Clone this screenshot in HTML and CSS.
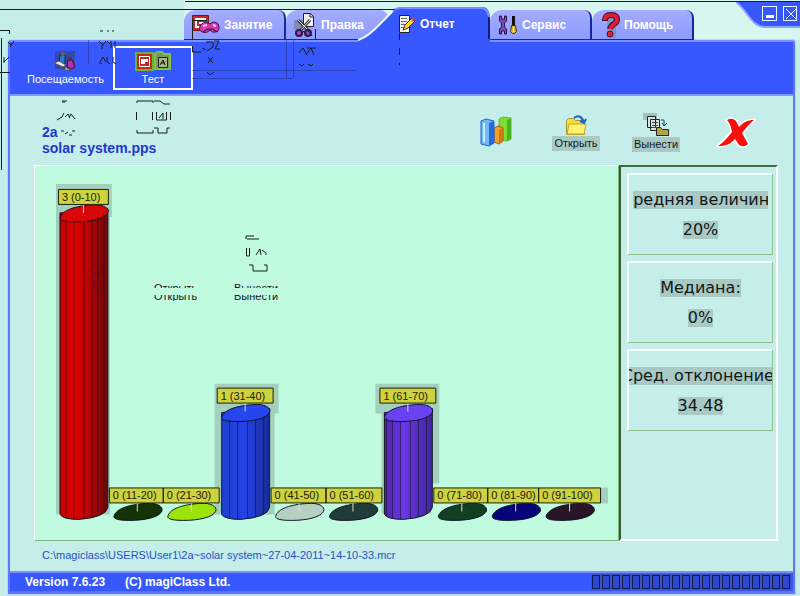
FILE: index.html
```html
<!DOCTYPE html>
<html lang="ru">
<head>
<meta charset="utf-8">
<title>magiClass</title>
<link rel="stylesheet" href="styles.css">
</head>
<body>
<div class="app">
  <header class="top">
    <nav class="tabs">
      <button class="tab">
        <svg class="icon" width="30" height="24" viewBox="0 0 30 24"><path fill="#c22a28" stroke="#701818" d="M2.500 2.500h16v15h-16z"/><path fill="none" stroke="#fff" stroke-width="2" d="M16 6H6v8h5M9 10h8"/><path fill="#d43ab0" stroke="#481050" d="M10 13q3-5 8-3l2 1q4-4 8 0 3 6-2 8-4 1-6-2-3 4-8 2-4-2-2-6z"/><path stroke="#ffc8ff" stroke-width="2" d="M13 13l4-1M23 12l3 1"/></svg>
        <span>Занятие</span>
      </button>
      <button class="tab tab-edit">
        <svg class="icon" width="26" height="26" viewBox="0 0 26 26"><path fill="#808bbd" d="M0 8h11v10H0z"/><path fill="#eee" stroke="#222" d="M9.500 1.500h7l3 3v10h-10z"/><path fill="none" stroke="#222" d="M16 2v3h4"/><path stroke="#333" stroke-width="3" d="M4 8l11 11M16 8L5 20"/><path stroke="#eee" d="M4 8l11 11M16 8L5 20"/><circle cx="5" cy="21" r="3" fill="#9c55c6" stroke="#37105c" stroke-width="2"/><circle cx="14" cy="21" r="3" fill="#9c55c6" stroke="#37105c" stroke-width="2"/></svg>
        <span>Правка</span>
      </button>
      <button class="tab tab-active" aria-current="page">
        <svg class="slope" width="132" height="42" viewBox="0 0 132 42"><path fill="#3858ff" d="M0 34C12 31 26 13 35 5q4-5 11-5h80q5 1 6 10v32H0z"/><path fill="none" stroke="#e8faff" stroke-width="2" d="M0 33C12 30 25 13 34 5"/><path fill="none" stroke="#7890ff" stroke-width="2" d="M35 4q4-4 11-3h79q5 2 6 9"/><path stroke="#102080" stroke-width="2" d="M131 10v22"/></svg>
        <svg class="icon" width="18" height="20" viewBox="0 0 18 20"><path fill="#f3f6e8" stroke="#222" d="M1.500 1.500h10v17h-10z"/><path stroke="#668" d="M3 4.500h6M3 7.500h6M3 10.500h5M3 13.500h4"/><path fill="#f4d83c" stroke="#443510" d="M5 16l2-5 7-7 3 3-7 7z"/><path fill="#e63c50" d="M13 5l2-2 2 3-2 2z"/></svg>
        <span>Отчет</span>
      </button>
      <button class="tab tab-service">
        <svg class="icon" width="20" height="20" viewBox="0 0 20 20"><path fill="#7d4caf" stroke="#2c1250" d="M1.500 1v5l2 2v4l-2 2v5h2v-3h3v3h2v-5l-2-2V8l2-2V1h-2v3h-3V1z"/><path fill="#111" d="M14 1h3v9h-3z"/><path fill="#e3b629" stroke="#403010" d="M13.500 10.500h4l1 6-2 2h-2l-2-2z"/><path stroke="#fff29a" d="M15.500 12v5"/></svg>
        <span>Сервис</span>
      </button>
      <button class="tab tab-help">
        <svg class="icon" width="18" height="26" viewBox="0 0 18 26"><path fill="#8992c8" d="M5 0h9v26H5z"/><path fill="none" stroke="#421428" stroke-width="6" d="M3 9q0-6 6-6 6 0 6 5c0 4-6 4-7 9"/><path fill="none" stroke="#e11d35" stroke-width="4" d="M3 8q0-5 6-5 6 0 6 5c0 4-6 4-7 9"/><circle cx="8" cy="22" r="3" fill="#e11d35" stroke="#421428"/></svg>
        <span>Помощь</span>
      </button>
    </nav>
    <div class="window-controls">
      <svg class="corner" width="64" height="26" viewBox="0 0 64 26"><path fill="#3858ff" d="M0 0h64v25H28C14 23 12 9 0 0z"/><path fill="none" stroke="#8ca3ff" stroke-width="2" d="M0 0C12 9 14 23 28 25h36"/></svg>
      <button class="win" aria-label="Свернуть"><svg width="14" height="14" viewBox="0 0 14 14"><path stroke="#fff" stroke-width="3" d="M3 9.500h8"/></svg></button>
      <button class="win" aria-label="Закрыть"><svg width="14" height="14" viewBox="0 0 14 14"><path stroke="#fff" d="M2 2l10 10M12 2L2 12"/></svg></button>
    </div>
  </header>

  <div class="frame">
    <div class="ribbon">
      <button class="ribbon-item">
        <svg width="24" height="20" viewBox="0 0 24 20"><path fill="#3349ad" d="M1 0h20v18H1z"/><path fill="#2678d9" stroke="#122850" d="M6 4h5v9H5z"/><circle cx="9" cy="3" r="2" fill="#8a5832"/><path fill="#b631af" stroke="#421040" d="M14 9h4l3 7-4 2-4-2z"/><circle cx="16" cy="8" r="2" fill="#5c3030"/><path fill="#e8e5dc" stroke="#555" d="M0 12l5-2 7 4-3 2zM11 16l6 3h-6z"/></svg>
        <span>Посещаемость</span>
      </button>
      <button class="ribbon-item selected">
        <svg width="36" height="20" viewBox="0 0 36 20"><path fill="#c02c20" stroke="#6fae3c" stroke-width="2" d="M1 2h17v17H1z"/><path fill="#b92b20" stroke="#fff" d="M4.500 5.500h10v10h-10z"/><path fill="#fff" d="M6 8h7v3h-3v2H6z"/><path fill="#81945b" stroke="#74c83c" stroke-width="2" d="M20 3l2-2h5l2 2h6v15H20z"/><path fill="#a7b581" stroke="#222" d="M23.500 6.500h9v10h-9z"/><path stroke="#111" fill="none" d="M25 14l3-5 2 5M26 12h4"/></svg>
        <span>Тест</span>
      </button>
    </div>

    <main class="content">
      <div class="heading">
        <h1>2a<br>solar system.pps</h1>
        <div class="actions">
          <button class="action" aria-label="Диаграмма"><svg width="32" height="32" viewBox="0 0 32 32"><path fill="#7edc35" stroke="#66b52d" d="M19 3l4-2 8 1v21l-4 2-8-2z"/><path fill="#45b51d" d="M27 4l4-2v21l-4 2z"/><path fill="#f3a12c" stroke="#9a5c16" d="M14 12l4-2 5 2v13l-4 3-5-2z"/><path fill="#c97917" d="M19 14l4-2v13l-4 3z"/><path fill="#73b8fa" stroke="#2263cb" d="M1 5l5-2 8 2v22l-5 3-8-2z"/><path fill="#276bd8" d="M9 7l5-2v22l-5 3z"/><path stroke="#c8efff" stroke-width="2" d="M4 7v19"/></svg></button>
          <button class="action"><svg width="24" height="22" viewBox="0 0 24 22"><path fill="#f3dd3c" stroke="#aa9630" d="M2.500 20.500v-14l2-2h5l2 2h9v14z"/><path fill="#fff270" stroke="#c0aa30" d="M3 20l2-10h17l-2 10z"/><path fill="none" stroke="#2465c4" stroke-width="2" d="M10 4q6-5 10 4M16 7l4 2 2-4"/></svg><span>Открыть</span></button>
          <button class="action"><svg width="28" height="24" viewBox="0 0 28 24"><path fill="#a1c3bf" d="M1 0h14v7H1z"/><path fill="#d7e4dd" stroke="#222" d="M5.500 3.500h8v11h-8zM8.500 6.500h9v11h-9z"/><path stroke="#444" d="M10 9.500h6M10 12.500h6M10 14.500h4"/><path fill="#b6a344" stroke="#222" d="M14.500 22.500v-8h4l2 2h6v6z"/><path fill="none" stroke="#203c70" d="M19 7h3v5M20 10l2 3 3-3"/></svg><span>Вынести</span></button>
          <button class="action" aria-label="Удалить"><svg width="40" height="32" viewBox="0 0 40 32"><path fill="#f8100c" stroke="#fff" stroke-width="3" paint-order="stroke" d="M11 4q5-3 9 1l3 6c5-5 8-7 15-7-5 4-8 8-12 13l6 11q-4 4-9 1l-4-6c-5 5-8 7-17 7 6-4 9-8 14-14-1-5-2-9-5-12z"/></svg></button>
        </div>
      </div>

      <div class="panels">
        <section class="chart">
          <svg viewBox="0 0 584 374" role="img">
            <defs>
              <linearGradient id="red"><stop offset="0" stop-color="#c40000"/><stop offset=".3" stop-color="#e00000"/><stop offset=".6" stop-color="#b80404"/><stop offset="1" stop-color="#6e0808"/></linearGradient>
              <linearGradient id="blue"><stop offset="0" stop-color="#2040d0"/><stop offset=".5" stop-color="#2442e8"/><stop offset="1" stop-color="#182c94"/></linearGradient>
              <linearGradient id="violet"><stop offset="0" stop-color="#5225a8"/><stop offset=".4" stop-color="#6a38e6"/><stop offset="1" stop-color="#40259c"/></linearGradient>
              <path id="disc" d="M-24 5C-22-3-8-7 8-8 19-9 26-5 24 0 21 6 7 9-8 9-18 9-24 8-24 5z"/>
            </defs>
            <g class="halo"><path d="M21 18h56v33h-2v298H21zM180 218h64v30h-4v101h-60zM341 218h64v100h-8v30h-50V248h-6zM560 322h14v16h-14z"/></g>
            <g class="shape">
              <path fill="url(#red)" d="M25 47v302q3 5 19 5 27-2 29-12V43z"/><use href="#disc" x="49" y="47" fill="#d90707"/>
              <path class="ribs" d="M31 53v300M39 55v299M49 55v299M57 54v297M63 51v298M69 48v298"/>
              <path fill="url(#blue)" d="M187 247v102q3 5 19 5 27-2 29-12V243z"/><use href="#disc" x="211" y="247" fill="#2546ef"/>
              <path class="ribs" d="M195 254v99M203 256v98M213 256v97M221 254v97M229 251v97"/>
              <path fill="url(#violet)" d="M350 247v102q3 5 19 5 27-2 29-12V243z"/><use href="#disc" x="374" y="247" fill="#6942f3"/>
              <path class="ribs" d="M352 252v99M358 254v99M366 256v98M376 256v97M384 254v97M392 251v97"/>
              <use href="#disc" x="103" y="346" fill="#143407"/><use href="#disc" x="157" y="346" fill="#9be30b"/>
              <use href="#disc" x="265" y="346" fill="#b5cfc3"/><use href="#disc" x="319" y="346" fill="#213b38"/>
              <use href="#disc" x="428" y="346" fill="#103f21"/><use href="#disc" x="482" y="346" fill="#050579"/><use href="#disc" x="536" y="346" fill="#291528"/>
            </g>
            <g class="tags">
              <path d="M23.500 23.500h50v15h-50zM182.500 222.500h56v15h-56zM345.500 222.500h56v15h-56zM74.500 322.500h54v15h-54zM128.500 322.500h56v15h-56zM236.500 322.500h55v15h-55zM291.500 322.500h56v15h-56zM399.500 322.500h54v15h-54zM453.500 322.500h51v15h-51zM504.500 322.500h62v15h-62z"/>
            </g>
            <path class="stems" d="M48.500 39v8M210.500 238v8M373.500 238v8M102.500 338v8M156.500 338v8M264.500 338v8M318.500 338v8M427.500 338v8M481.500 338v8M535.500 338v8"/>
            <g class="values">
              <text x="27" y="35">3 (0-10)</text><text x="186" y="234">1 (31-40)</text><text x="349" y="234">1 (61-70)</text>
              <text x="78" y="334">0 (11-20)</text><text x="132" y="334">0 (21-30)</text><text x="240" y="334">0 (41-50)</text><text x="295" y="334">0 (51-60)</text><text x="403" y="334">0 (71-80)</text><text x="457" y="334">0 (81-90)</text><text x="508" y="334">0 (91-100)</text>
            </g>
          </svg>
        </section>
        <aside class="stats">
          <div class="stat"><div class="line"><span>Средняя величина</span></div><div class="line"><span>20%</span></div></div>
          <div class="stat"><div class="line"><span>Медиана:</span></div><div class="line"><span>0%</span></div></div>
          <div class="stat"><div class="line wide"><span>Сред. отклонение:</span></div><div class="line"><span>34.48</span></div></div>
        </aside>
      </div>
      <p class="path">C:\magiclass\USERS\User1\2a~solar system~27-04-2011~14-10-33.mcr</p>
    </main>

    <footer class="status">
      <span>Version 7.6.23</span><span>(C) magiClass Ltd.</span>
      <div class="cells"><i></i><i></i><i></i><i></i><i></i><i></i><i></i><i></i><i></i><i></i><i></i><i></i><i></i><i></i><i></i><i></i><i></i><i></i><i></i><i></i></div>
    </footer>
  </div>

  <div class="traces" aria-hidden="true">
    <svg width="620" height="310" viewBox="0 0 620 310">
      <path class="faint" d="M88.500 40v24M192 70.500h164M192 78.500h101M286.500 40v38M293.500 40v38"/>
      <path d="M0 9.500h395M0 30.500h10M1.500 38v132M9.500 30v4M0 72.500h10M8 42l3 3M14 41l-4 6M9 57l-5 5M4 57v6M100 31h3M107 31h2M112 31h2M99 41l4 4 3-4M102 45v4M107 41l3 3M111 41v7M115 41v7M100 62l3-5 3 5M99 63h3M107 57v5l3 2M113 57v5l3 2M192.500 22v18M192 20.500h15M192.500 46v6h9M203 32l5-3h4l6 3M206 42h7v5l-6 4M202 48l4 2M214 41h5l-4 8h5M208 57l5 6M213 57l-5 6M207 72l3 3 4-3M300 36l4-5 4 5M308 31l4 5M315.500 29v10M299 53l4-5 4 7M306 55l5-7 3 7M307 48h9M299 64l3 2 2-2M308 64l3 2 2-2M399.500 33v7M399.500 48v7M399.500 63v2"/>
      <path d="M62 101h5M62 102h3M57 120l5-3 2-4M65 117l3-3 2 4M69 118l2-4 4 5M61 131h3M65 134l3-2M69 135h3M72 131h3M137 103v-2h16v2M154 101h6l4 3h6M136.500 112v8M152.500 112v8M156.500 112v8h10v-8M170.500 112v8M159 118l4-5v6M137 130v3h16v-3M154 128h4v5h9v-5h3M246 239v-3h8M247 239h12M246.500 248v8M249.500 248v8h-3M256 255l4-6 1 6M262 250l4 3v2M249 265h4v6h14v-6h-3"/>
      <path class="faint" d="M93 265h9v8h-9M94 280v8h8M102 280v5"/>
    </svg>
    <div class="slice upper open">Открыть</div><div class="slice lower open">Открыть</div>
    <div class="slice upper export">Вынести</div><div class="slice lower export">Вынести</div>
  </div>
</div>
</body>
</html>
```

FILE: styles.css
```css
* { box-sizing: border-box; }
body { margin: 0; background: #c5eeea; font-family: "Liberation Sans", Arial, sans-serif; font-size: 11px; color: #101818; }
button { border: 0; padding: 0; margin: 0; background: none; font: inherit; color: inherit; }
h1, p { margin: 0; }

.app { position: relative; min-height: 100vh; display: flex; flex-direction: column; overflow: hidden; }

.top { display: flex; height: 40px; padding-left: 184px; background: linear-gradient(90deg, #c5eeea 184px, #d6f6ef 184px); }
.top::before { content: ""; position: absolute; top: 1px; left: 185px; right: 0; height: 1px; background: #142018; }
.tabs { display: flex; align-items: flex-end; flex: 1; }
.tab { position: relative; display: flex; align-items: center; gap: 4px; width: 102px; height: 30px; padding-left: 6px; color: #fff; font-weight: bold; font-size: 12px; background: linear-gradient(#a6acff, #8c9cff); border-right: 2px solid #1628a0; border-bottom: 1px solid #1628a0; border-radius: 12px 8px 0 0; }
.tab .icon { position: relative; flex: none; }
.tab span { position: relative; }
.tab-edit { padding-left: 8px; gap: 1px; border-right: 0; }
.tab-active { z-index: 1; height: 32px; padding-left: 10px; background: none; border: 0; }
.slope { position: absolute; right: 0; top: -1px; }
.tab-service { padding-left: 8px; }
.tab-help { padding-left: 10px; }

.window-controls { position: relative; display: flex; gap: 6px; width: 64px; padding: 6px 3px 0 26px; }
.corner { position: absolute; left: 0; top: 2px; }
.win { position: relative; width: 15px; height: 15px; border: 1px solid #e8f4ff; display: grid; place-items: center; overflow: hidden; }

.frame { flex: 1; display: flex; flex-direction: column; margin: 0 5px 2px 8px; border: 2px solid #5c78ff; border-top: 0; border-radius: 3px 3px 0 0; box-shadow: 0 0 0 1px #b8d4ff; }
.ribbon { display: flex; height: 56px; padding: 4px 0 0 8px; background: #3858ff; border-top: 2px solid #7890ff; border-bottom: 2px solid #7c98ff; color: #fff; }
.ribbon-item { width: 95px; height: 44px; display: flex; flex-direction: column; align-items: center; justify-content: center; gap: 2px; }
.ribbon-item.selected { width: 80px; border: 2px solid #fff; }

.content { flex: 1; display: flex; flex-direction: column; }
.heading { display: flex; justify-content: space-between; height: 69px; padding: 16px 17px 0 32px; }
h1 { padding-top: 12px; font-size: 14px; line-height: 16px; color: #2038cc; }
.actions { display: grid; grid-template-columns: repeat(4, 80px); align-items: start; }
.action { display: flex; flex-direction: column; align-items: center; justify-content: center; min-height: 40px; }
.action span { background: #a9c9c5; padding: 0 2px; line-height: 15px; }

.panels { flex: 1; display: grid; grid-template-columns: minmax(0, 585fr) minmax(0, 159fr); margin: 0 15px 0 24px; }
.chart { background: #c0fbe0; border: 1px solid #7fb67f; border-top-color: #fff; border-left-color: #fff; }
.chart svg { display: block; width: 100%; }
.halo { fill: #a3cfbd; }
.shape { stroke: #141428; }
.ribs { fill: none; stroke: #14142c; stroke-opacity: .65; }
.tags { fill: #ced23d; stroke: #1c2008; }
.stems { stroke: #d9e0ce; }
.values { font-size: 11px; fill: #20200c; }
.stats { display: flex; flex-direction: column; gap: 6px; padding: 6px 3px 0 6px; border: 2px solid #fff; border-top: 2px solid #426b42; border-left: 2px solid #365c36; }
.stat { height: 82px; padding: 16px 0 0; border: 1px solid #8abf8c; border-top: 2px solid #f2fffb; border-left: 2px solid #f2fffb; font: 16px/20px "DejaVu Sans", sans-serif; }
.line { display: flex; justify-content: center; margin: 0 4px 12px; overflow: hidden; white-space: nowrap; }
.line.wide { margin: 0 0 12px; }
.line span { line-height: 18px; background: #a9c9c5; }

.path { padding: 6px 32px 8px; line-height: 16px; color: #2850c8; }
.status { display: flex; align-items: center; gap: 20px; height: 21px; padding: 0 2px 0 15px; background: #3858ff; border-top: 2px solid #7890ff; border-bottom: 1px solid #5870ff; color: #fff; font-weight: bold; font-size: 12px; }
.cells { display: flex; gap: 2px; margin-left: auto; padding: 1px; background: #3d51b8; }
.cells i { width: 8px; height: 14px; border: 1px solid #101c50; background: #2c48d0; }

.traces { position: absolute; inset: 0; z-index: 2; pointer-events: none; }
.traces svg { position: absolute; left: 0; top: 0; fill: none; stroke: #142018; }
.traces .faint { stroke: #14205a; stroke-opacity: .4; }
.slice { position: absolute; height: 6px; overflow: hidden; }
.upper { top: 282px; line-height: 12px; }
.lower { top: 295px; display: flex; align-items: flex-end; line-height: 10px; }
.open { left: 154px; }
.export { left: 234px; }
```
